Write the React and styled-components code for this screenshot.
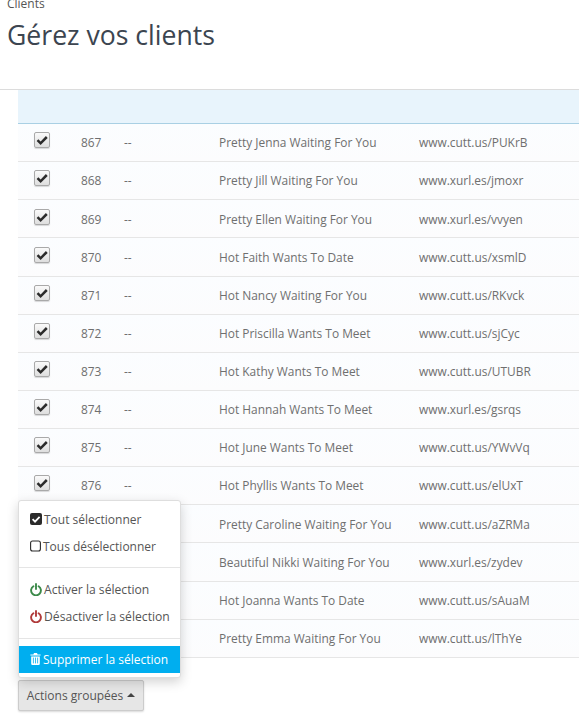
import React from "react";
import styled, { createGlobalStyle } from "styled-components";

const Global = createGlobalStyle`
  html, body { margin: 0; padding: 0; background: #fff; overflow: hidden; }
  body { font-family: "Open Sans", "Liberation Sans", sans-serif; color: #666; width: 579px; height: 721px; }
`;
const Page = styled.div`display: flex; flex-direction: column; width: 579px; height: 721px; overflow: hidden;`;
const PageHead = styled.header`
  box-sizing: border-box; padding: 0 7px; border-bottom: 1px solid #dcdcdc; background: #fff;
  flex: none; height: 90px;
`;
const Crumb = styled.div`font-size: 12px; line-height: 12px; margin-top: -2px; color: #555;`;
const Title = styled.h1`font-size: 26.6px; line-height: 36px; font-weight: 400; margin: 7px 0 0; color: #3c4550;`;
const Body = styled.main`padding-left: 18px; display: flex; flex-direction: column;`;
const Table = styled.div`display: flex; flex-direction: column;`;
const HeadRow = styled.div`height: 33px; background: #e8f4fc; border-bottom: 1px solid #a9d0e4; flex: none;`;
const Row = styled.div`
  display: grid; grid-template-columns: 63px 43px 95px 200px 1fr; align-items: center;
  height: 38.14px; box-sizing: border-box; border-bottom: 1px solid #e6e6e6; flex: none; padding-bottom: .46px;
  background: linear-gradient(#fbfdff, #fcfcfd);
  font-size: 11.92px; color: #6f6f6f;
`;
const CheckCell = styled.div`padding-left: 16px; display: flex; margin-top: -4px;`;
const CheckBox = styled.span`
  width: 16px; height: 16px; box-sizing: border-box; border: 1px solid #a9a9a9; border-radius: 2px;
  background: linear-gradient(#fafafa, #dedede); display: flex; align-items: center; justify-content: center;
  box-shadow: 0 1px 1px rgba(0,0,0,.15);
`;
const Footer = styled.div`position: relative; padding-top: 22px;`;
const GroupButton = styled.button`
  font: 12px "Open Sans", sans-serif; color: #555; height: 31px; width: 126px; padding: 0;
  background: #e6e6e6; border: 1px solid #ccc; border-radius: 2px; box-shadow: 0 1px 2px rgba(0,0,0,.15);
  display: flex; align-items: center; justify-content: center; gap: 4px;
`;
const Caret = styled.span`
  width: 0; height: 0; border-left: 4px solid transparent; border-right: 4px solid transparent; border-bottom: 4px solid #444;
`;
const Menu = styled.div`
  position: absolute; left: 0; bottom: 33px; width: 163px; height: 178px; box-sizing: border-box;
  background: #fff; border: 1px solid #dedede; border-radius: 3px; box-shadow: 0 4px 12px rgba(0,0,0,.18);
  display: flex; flex-direction: column; padding-top: 5px;
`;
const Item = styled.div`
  display: flex; align-items: center; gap: 2px; height: 27px; padding-left: 11px; flex: none;
  font-size: ${p => p.$size || "12px"}; color: ${p => (p.$active ? "#fff" : "#555")};
  background: ${p => (p.$active ? "#00aeef" : "transparent")};
`;
const Divider = styled.div`height: 1px; background: #e5e5e5; flex: none; margin: ${p => p.$m};`;

const rows = [
  [867, "Pretty Jenna Waiting For You", "www.cutt.us/PUKrB"],
  [868, "Pretty Jill Waiting For You", "www.xurl.es/jmoxr"],
  [869, "Pretty Ellen Waiting For You", "www.xurl.es/vvyen"],
  [870, "Hot Faith Wants To Date", "www.cutt.us/xsmlD"],
  [871, "Hot Nancy Waiting For You", "www.cutt.us/RKvck"],
  [872, "Hot Priscilla Wants To Meet", "www.cutt.us/sjCyc"],
  [873, "Hot Kathy Wants To Meet", "www.cutt.us/UTUBR"],
  [874, "Hot Hannah Wants To Meet", "www.xurl.es/gsrqs"],
  [875, "Hot June Wants To Meet", "www.cutt.us/YWvVq"],
  [876, "Hot Phyllis Wants To Meet", "www.cutt.us/elUxT"],
  [877, "Pretty Caroline Waiting For You", "www.cutt.us/aZRMa"],
  [878, "Beautiful Nikki Waiting For You", "www.xurl.es/zydev"],
  [879, "Hot Joanna Wants To Date", "www.cutt.us/sAuaM"],
  [880, "Pretty Emma Waiting For You", "www.cutt.us/lThYe"],
];

const Check = ({ color = "#2b2b2b", size = 12 }) => (
  <svg width={size} height={size} viewBox="0 0 12 12">
    <path d="M1.5 6.2 4.6 9.3 10.8 3" fill="none" stroke={color} strokeWidth="2.5" />
  </svg>
);
const CheckedIcon = () => (
  <svg width="12" height="12" viewBox="0 0 12 12">
    <rect width="12" height="12" rx="2" fill="#2b2b2b" />
    <path d="M2.6 6.2 5 8.6 9.6 3.8" fill="none" stroke="#fff" strokeWidth="1.8" />
  </svg>
);
const EmptyIcon = () => (
  <svg width="11" height="12" viewBox="0 0 11 12">
    <rect x=".6" y="1" width="9.8" height="10" rx="2" fill="none" stroke="#2b2b2b" strokeWidth="1.1" />
  </svg>
);
const Power = ({ color }) => (
  <svg width="12" height="13" viewBox="0 0 12 13">
    <path d="M3.4 3.3a4.9 4.9 0 1 0 5.2 0" fill="none" stroke={color} strokeWidth="1.9" strokeLinecap="round" />
    <path d="M6 1v5" stroke={color} strokeWidth="1.9" strokeLinecap="round" />
  </svg>
);
const Trash = () => (
  <svg width="11" height="12" viewBox="0 0 11 12">
    <path d="M4 0h3l.6 1.4H10.6v1.2H.4V1.4h3zM1.2 3.4h8.6v7.4q0 1.2-1.2 1.2H2.4q-1.2 0-1.2-1.2z" fill="#fff" />
    <path d="M3.4 4.6v5.8M5.5 4.6v5.8M7.6 4.6v5.8" stroke="#00aeef" strokeWidth=".8" />
  </svg>
);

export default function App() {
  return (
    <Page>
      <Global />
      <PageHead>
        <Crumb>Clients</Crumb>
        <Title>Gérez vos clients</Title>
      </PageHead>
      <Body>
        <Table>
          <HeadRow />
          {rows.map(([id, name, url]) => (
            <Row key={id}>
              <CheckCell><CheckBox><Check /></CheckBox></CheckCell>
              <div>{id}</div>
              <div>--</div>
              <div>{name}</div>
              <div>{url}</div>
            </Row>
          ))}
        </Table>
        <Footer>
          <Menu>
            <Item><CheckedIcon />Tout sélectionner</Item>
            <Item><EmptyIcon />Tous désélectionner</Item>
            <Divider $m="7px 0 8px" />
            <Item $size="12.15px"><Power color="#3c8a4a" />Activer la sélection</Item>
            <Item $size="12.15px"><Power color="#b03a3a" />Désactiver la sélection</Item>
            <Divider $m="8px 0 7px" />
            <Item $active><Trash />Supprimer la sélection</Item>
          </Menu>
          <GroupButton>Actions groupées <Caret /></GroupButton>
        </Footer>
      </Body>
    </Page>
  );
}
